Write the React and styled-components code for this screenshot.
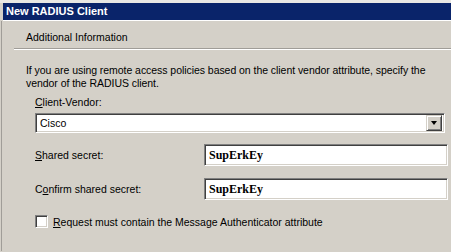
import styled, { createGlobalStyle } from "styled-components";

const GlobalStyle = createGlobalStyle`
  body {
    margin: 0;
    background: #d4d0c8;
  }
`;

const Window = styled.div`
  width: 451px;
  height: 252px;
  overflow: hidden;
  background: #d4d0c8;
  border-top: 3px solid #e9e8e4;
  box-sizing: border-box;
  font-family: "Liberation Sans", Arial, sans-serif;
  font-size: 10.5px;
  color: #000;
`;

const TitleBar = styled.div`
  height: 17px;
  margin-left: 3px;
  padding-left: 3px;
  background: #0a246a;
  border-bottom: 1px solid #fff;
  color: #fff;
  font-weight: bold;
  font-size: 11px;
  line-height: 17px;
`;

const Frame = styled.div`
  display: flex;
  flex-direction: column;
  margin-left: 1px;
  border-left: 1px solid #a09d98;
  height: 230px;
`;

const Header = styled.div`
  height: 28px;
  box-sizing: border-box;
  padding: 5px 0 0 12px;
  margin-left: 12px;
  display: flex;
  align-items: center;
  border-bottom: 1px solid #a09d98;
  box-shadow: 0 1px 0 #fff;
`;

const Body = styled.div`
  padding: 15px 4px 0 24px;
`;

const Paragraph = styled.p`
  margin: 0;
  line-height: 13px;
  white-space: nowrap;
  letter-spacing: -0.05px;
`;

const Fields = styled.div`
  padding-left: 9px;
  display: flex;
  flex-direction: column;
`;

const Label = styled.div`
  margin-top: ${(p) => p.$top || 0}px;
  line-height: 13px;
`;

const Sunken = styled.div`
  background: #fff;
  border-top: 1px solid #808080;
  border-left: 1px solid #808080;
  border-bottom: 1px solid #fff;
  border-right: 1px solid #fff;
  box-shadow: inset 1px 1px 0 #404040, inset -1px -1px 0 #d4d0c8;
  box-sizing: border-box;
`;

const Select = styled(Sunken)`
  margin-top: 4px;
  width: 410px;
  height: 20px;
  display: flex;
  align-items: center;
  justify-content: space-between;
  padding: 0 2px 0 4px;
`;

const ArrowButton = styled.div`
  width: 16px;
  height: 16px;
  background: #d4d0c8;
  box-sizing: border-box;
  border-top: 1px solid #d4d0c8;
  border-left: 1px solid #d4d0c8;
  border-right: 1px solid #404040;
  border-bottom: 1px solid #404040;
  box-shadow: inset 1px 1px 0 #fff, inset -1px -1px 0 #808080;
  display: flex;
  align-items: center;
  justify-content: center;

  &::after {
    content: "";
    border-left: 3.5px solid transparent;
    border-right: 3.5px solid transparent;
    border-top: 4px solid #000;
  }
`;

const Row = styled.div`
  display: flex;
  align-items: center;
  justify-content: space-between;
  margin-top: ${(p) => p.$top}px;
`;

const SecretInput = styled(Sunken)`
  width: 244px;
  height: 22px;
  padding-left: 4px;
  display: flex;
  align-items: center;
  font-family: "Liberation Serif", "Times New Roman", serif;
  font-weight: bold;
  font-size: 12px;
  margin-right: -1px;
`;

const CheckRow = styled.label`
  display: flex;
  align-items: center;
  gap: 5px;
  margin-top: 15px;
`;

const Box = styled(Sunken)`
  width: 13px;
  height: 13px;
`;

function App() {
  return (
    <>
      <GlobalStyle />
      <Window>
        <TitleBar>New RADIUS Client</TitleBar>
        <Frame>
          <Header>Additional Information</Header>
          <Body>
            <Paragraph>
              If you are using remote access policies based on the client vendor attribute, specify the
              <br />
              vendor of the RADIUS client.
            </Paragraph>
            <Fields>
              <Label $top={6}>
                <u>C</u>lient-Vendor:
              </Label>
              <Select>
                <span>Cisco</span>
                <ArrowButton />
              </Select>
              <Row $top={11}>
                <Label>
                  <u>S</u>hared secret:
                </Label>
                <SecretInput>SupErkEy</SecretInput>
              </Row>
              <Row $top={12}>
                <Label>
                  C<u>o</u>nfirm shared secret:
                </Label>
                <SecretInput>SupErkEy</SecretInput>
              </Row>
              <CheckRow>
                <Box />
                <span>
                  <u>R</u>equest must contain the Message Authenticator attribute
                </span>
              </CheckRow>
            </Fields>
          </Body>
        </Frame>
      </Window>
    </>
  );
}

export default App;
